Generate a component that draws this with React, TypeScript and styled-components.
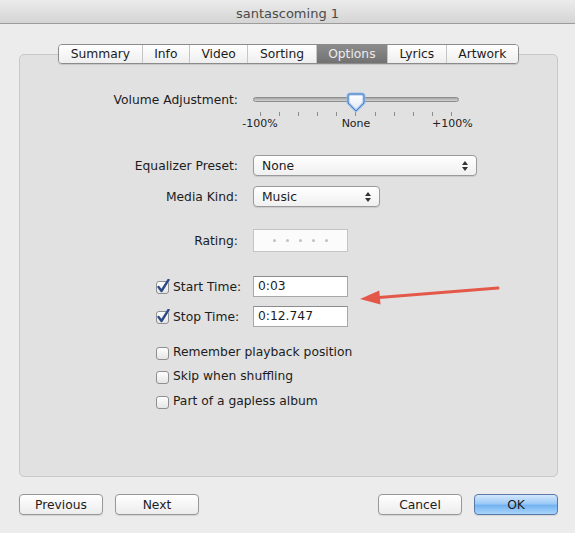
import React from "react"
import styled, { createGlobalStyle } from "styled-components"

const GlobalStyle = createGlobalStyle`
  * { box-sizing: border-box; }
  html, body {
    margin: 0;
    padding: 0;
    background: #ececec;
  }
  body {
    font-family: "DejaVu Sans", "Liberation Sans", sans-serif;
    font-size: 12.3px;
    color: #1c1c1c;
  }
`

const Window = styled.div`
  width: 575px;
  height: 533px;
  display: flex;
  flex-direction: column;
  background: #ececec;
  overflow: hidden;
`

const TitleBar = styled.div`
  height: 24px;
  flex: none;
  display: flex;
  align-items: center;
  justify-content: center;
  padding-top: 3px;
  background: linear-gradient(#ececec, #d4d4d4);
  border-bottom: 1px solid #9c9c9c;
  font-size: 13px;
  color: #4a4a4a;
`

const Body = styled.div`
  padding: 20px 17px 0 19px;
`

const TabBar = styled.div`
  display: flex;
  justify-content: center;
  margin-bottom: -10px;
  position: relative;
  z-index: 1;
`

const TabGroup = styled.div`
  display: flex;
  border: 1px solid #8b8b8b;
  border-radius: 4px;
  overflow: hidden;
  box-shadow: 0 1px 1px rgba(0, 0, 0, 0.12);
`

const Tab = styled.div<{ $active?: boolean }>`
  height: 18px;
  line-height: 18px;
  padding: 0 11.5px;
  background: ${p => p.$active ? "linear-gradient(#8b8b8b, #727272)" : "linear-gradient(#ffffff, #eeeeee)"};
  color: ${p => p.$active ? "#ececec" : "#1c1c1c"};

  & + & {
    border-left: 1px solid #c6c6c6;
  }
`

const Panel = styled.div`
  position: relative;
  height: 423px;
  border: 1px solid #c8c8c8;
  border-radius: 5px;
  background: #e1e1e1;
  padding-top: 35px;
  display: flex;
  flex-direction: column;
`

const FormRow = styled.div<{ $top: number; $align?: string }>`
  display: flex;
  align-items: ${p => p.$align || "center"};
  margin-top: ${p => p.$top}px;
`

const Label = styled.div<{ $offset?: number }>`
  width: 218px;
  margin-right: 15px;
  margin-top: ${p => p.$offset || 0}px;
  display: flex;
  justify-content: flex-end;
  align-items: center;
  line-height: 18px;
  white-space: nowrap;
`

const CheckLabel = styled(Label)`
  justify-content: flex-start;
  gap: 3px;
  padding-left: 135px;
`

const SliderBox = styled.div`
  width: 206px;
  display: flex;
  flex-direction: column;
`

const TrackArea = styled.div`
  position: relative;
  height: 18px;
  display: flex;
  align-items: center;
`

const Track = styled.div`
  flex: 1;
  height: 5px;
  border-radius: 3px;
  border: 1px solid #8c8c8c;
  background: linear-gradient(#a6a6a6, #d2d2d2);
`

const Thumb = styled.svg`
  position: absolute;
  left: calc(50% - 10px);
  top: 2px;
`

const Ticks = styled.div`
  display: flex;
  justify-content: space-between;
  padding: 0 7px;
  margin-top: 4px;
  height: 4px;
`

const Tick = styled.span`
  width: 1px;
  height: 4px;
  background: #8d8d8d;
`

const ScaleLabels = styled.div`
  display: flex;
  justify-content: space-between;
  margin: 1px -13px 0;
  font-size: 11px;
  line-height: 13px;
  color: #222;
`

const ScaleLabel = styled.span`
  width: 40px;
  text-align: center;
`

const Select = styled.div<{ $width: number }>`
  width: ${p => p.$width}px;
  height: 21px;
  border: 1px solid #9a9a9a;
  border-radius: 4px;
  background: linear-gradient(#ffffff, #f0f0f0);
  box-shadow: 0 1px 1px rgba(0, 0, 0, 0.1);
  display: flex;
  align-items: center;
  justify-content: space-between;
  padding: 0 8px;
`

const RatingBox = styled.div`
  width: 95px;
  height: 23px;
  border: 1px solid #c4c4c4;
  background: #fbfbfb;
  display: flex;
  align-items: center;
  justify-content: center;
  gap: 10px;
`

const Dot = styled.span`
  width: 3px;
  height: 3px;
  border-radius: 50%;
  background: #c2c2c2;
`

const TextField = styled.div`
  width: 95px;
  height: 21px;
  border: 1px solid #a8a8a8;
  border-top-color: #8c8c8c;
  background: #ffffff;
  padding-left: 4px;
  line-height: 19px;
`

const CheckRow = styled.div<{ $top?: number }>`
  display: flex;
  align-items: center;
  gap: 3px;
  height: 24px;
  padding-left: 135px;
  margin-top: ${p => p.$top || 0}px;
`

const Box = styled.span`
  width: 15px;
  height: 15px;
  display: inline-flex;
`

const Annotation = styled.svg`
  position: absolute;
  left: 334px;
  top: 224px;
`

const ButtonBar = styled.div`
  display: flex;
  justify-content: space-between;
  margin-top: 17px;
`

const ButtonGroup = styled.div`
  display: flex;
  gap: 12px;
`

const Button = styled.div<{ $primary?: boolean }>`
  width: 84px;
  height: 21px;
  border-radius: 4px;
  border: 1px solid ${p => p.$primary ? "#5a79a8" : "#979797"};
  background: ${p => p.$primary
    ? "linear-gradient(#d4e8fc, #9ccaf6 45%, #74b3f1 55%, #a9d5fb)"
    : "linear-gradient(#ffffff, #ececec)"};
  box-shadow: 0 1px 1px rgba(0, 0, 0, 0.1);
  display: flex;
  align-items: center;
  justify-content: center;
  color: #1c1c1c;
`

const Arrows = () => (
  <svg width="6" height="10" viewBox="0 0 6 10">
    <path d="M3 0 L6 4 H0 Z" fill="#333" />
    <path d="M3 10 L6 6 H0 Z" fill="#333" />
  </svg>
)

const Checkbox = ({ checked }: { checked?: boolean }) => (
  <Box>
    <svg width="15" height="15" viewBox="0 0 15 15">
      <defs>
        <linearGradient id="cbg" x1="0" y1="0" x2="0" y2="1">
          <stop offset="0" stopColor="#ffffff" />
          <stop offset="1" stopColor="#e4e4e4" />
        </linearGradient>
      </defs>
      <rect x="1.5" y="2.5" width="12" height="12" rx="2.5" fill="url(#cbg)" stroke="#8f8f8f" />
      {checked && (
        <path d="M3.5 8 L6.5 12 L13.5 0.8" fill="none" stroke="#2b4a86" strokeWidth="2.4" strokeLinecap="round" strokeLinejoin="round" />
      )}
    </svg>
  </Box>
)

const tabs = ["Summary", "Info", "Video", "Sorting", "Options", "Lyrics", "Artwork"]

const App = () => (
  <Window>
    <GlobalStyle />
    <TitleBar>santascoming 1</TitleBar>
    <Body>
      <TabBar>
        <TabGroup>
          {tabs.map(t => <Tab key={t} $active={t === "Options"}>{t}</Tab>)}
        </TabGroup>
      </TabBar>
      <Panel>
        <FormRow $top={0} $align="flex-start">
          <Label $offset={1}>Volume Adjustment:</Label>
          <SliderBox>
            <TrackArea>
              <Track />
              <Thumb width="20" height="21" viewBox="0 0 20 21">
                <defs>
                  <linearGradient id="thumb" x1="0" y1="0" x2="0" y2="1">
                    <stop offset="0" stopColor="#ffffff" />
                    <stop offset="1" stopColor="#dfe7f2" />
                  </linearGradient>
                </defs>
                <path d="M4 2 H16 Q18 2 18 4 V11 L10 19 L2 11 V4 Q2 2 4 2 Z" fill="url(#thumb)" stroke="#9cc0ec" strokeWidth="3" strokeLinejoin="round" />
                <path d="M4 2 H16 Q18 2 18 4 V11 L10 19 L2 11 V4 Q2 2 4 2 Z" fill="none" stroke="#4f7fc2" strokeWidth="1" strokeLinejoin="round" />
              </Thumb>
            </TrackArea>
            <Ticks>
              {Array.from({ length: 11 }).map((_, i) => <Tick key={i} />)}
            </Ticks>
            <ScaleLabels>
              <ScaleLabel>-100%</ScaleLabel>
              <ScaleLabel>None</ScaleLabel>
              <ScaleLabel>+100%</ScaleLabel>
            </ScaleLabels>
          </SliderBox>
        </FormRow>

        <FormRow $top={25}>
          <Label>Equalizer Preset:</Label>
          <Select $width={224}>
            <span>None</span>
            <Arrows />
          </Select>
        </FormRow>

        <FormRow $top={10}>
          <Label>Media Kind:</Label>
          <Select $width={127}>
            <span>Music</span>
            <Arrows />
          </Select>
        </FormRow>

        <FormRow $top={22}>
          <Label>Rating:</Label>
          <RatingBox>
            {Array.from({ length: 5 }).map((_, i) => <Dot key={i} />)}
          </RatingBox>
        </FormRow>

        <FormRow $top={24}>
          <CheckLabel><Checkbox checked />Start Time:</CheckLabel>
          <TextField>0:03</TextField>
        </FormRow>

        <FormRow $top={9}>
          <CheckLabel><Checkbox checked />Stop Time:</CheckLabel>
          <TextField>0:12.747</TextField>
        </FormRow>

        <CheckRow $top={13}><Checkbox />Remember playback position</CheckRow>
        <CheckRow><Checkbox />Skip when shuffling</CheckRow>
        <CheckRow $top={1}><Checkbox />Part of a gapless album</CheckRow>

        <Annotation width="150" height="30" viewBox="0 0 150 30">
          <line x1="144" y1="9" x2="22" y2="18.7" stroke="#e4584a" strokeWidth="3" strokeLinecap="round" />
          <path d="M6 20 L25.3 11.4 L26.5 25.4 Z" fill="#e4584a" />
        </Annotation>
      </Panel>
      <ButtonBar>
        <ButtonGroup>
          <Button>Previous</Button>
          <Button>Next</Button>
        </ButtonGroup>
        <ButtonGroup>
          <Button>Cancel</Button>
          <Button $primary>OK</Button>
        </ButtonGroup>
      </ButtonBar>
    </Body>
  </Window>
)

export default App
